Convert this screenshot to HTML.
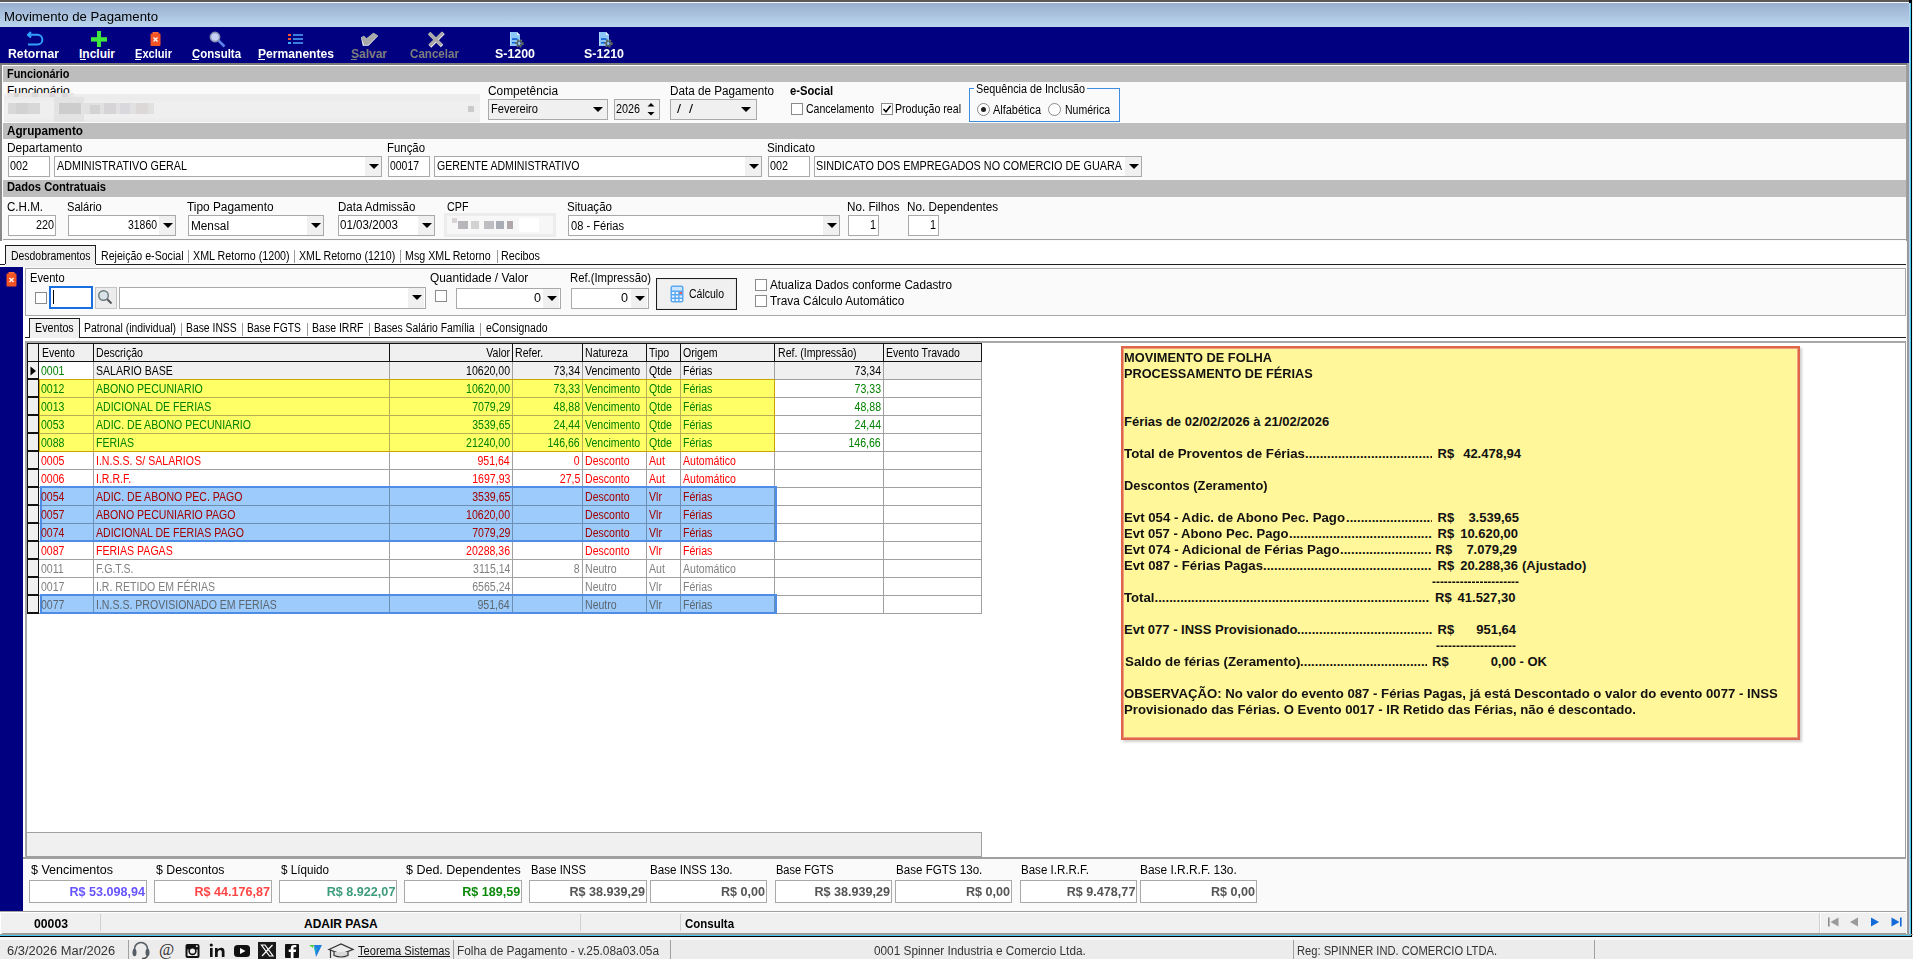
<!DOCTYPE html>
<html><head><meta charset="utf-8"><title>Movimento de Pagamento</title>
<style>
html,body{margin:0;padding:0;}
body{width:1913px;height:959px;position:relative;overflow:hidden;background:#fafafa;font-family:"Liberation Sans", sans-serif;}
body div, body svg{position:absolute;box-sizing:border-box;}
.t{white-space:pre;}

.inp{background:#fff;border:1px solid #a5a5a5;}
.sel{background:#fff;border:1px solid #a5a5a5;}
.selg{background:#f0f0f0;border:1px solid #a5a5a5;}
.hdr{background:#bdbdbd;}
.arr{width:0;height:0;border-left:5px solid transparent;border-right:5px solid transparent;border-top:5px solid #000;}
.cb{background:#fff;border:1px solid #8f8f8f;}

</style></head><body>

<div style="left:0px;top:0px;width:1913px;height:2px;background:#5a5a5a"></div>
<div style="left:0px;top:2px;width:1913px;height:1px;background:#f4f7fb"></div>
<div style="left:0px;top:3px;width:1909px;height:24px;background:linear-gradient(#98b0cf,#bcd5ee)"></div>
<div style="left:1909px;top:0px;width:3px;height:937px;background:#000"></div>
<div style="left:1909px;top:3px;width:1px;height:933px;background:#b5d5ee"></div>
<div style="left:1910px;top:3px;width:1px;height:933px;background:#45c8f2"></div>
<div style="left:1912px;top:0px;width:1px;height:959px;background:#eeeeee"></div>
<div class="t" style="left:4.00px;top:10.00px;font-size:13px;line-height:13px;transform:scaleX(1.0148);transform-origin:0 0;">Movimento de Pagamento</div>
<div style="left:0px;top:27px;width:1909px;height:36px;background:#000080"></div>
<div class="t" style="left:8.00px;top:47.84px;font-size:12px;line-height:12px;font-weight:700;color:#fff;transform:scaleX(1.0198);transform-origin:0 0;">Retornar</div>
<div class="t" style="left:79.00px;top:47.84px;font-size:12px;line-height:12px;font-weight:700;color:#fff;">Incluir</div>
<div class="t" style="left:135.00px;top:47.84px;font-size:12px;line-height:12px;font-weight:700;color:#fff;transform:scaleX(0.9245);transform-origin:0 0;">Excluir</div>
<div class="t" style="left:192.00px;top:47.84px;font-size:12px;line-height:12px;font-weight:700;color:#fff;transform:scaleX(0.9545);transform-origin:0 0;">Consulta</div>
<div class="t" style="left:258.00px;top:47.84px;font-size:12px;line-height:12px;font-weight:700;color:#fff;transform:scaleX(1.0084);transform-origin:0 0;">Permanentes</div>
<div class="t" style="left:351.00px;top:47.84px;font-size:12px;line-height:12px;font-weight:700;color:#7d7d7d;">Salvar</div>
<div class="t" style="left:410.00px;top:47.84px;font-size:12px;line-height:12px;font-weight:700;color:#7d7d7d;transform:scaleX(0.9666);transform-origin:0 0;">Cancelar</div>
<div class="t" style="left:495.00px;top:47.84px;font-size:12px;line-height:12px;font-weight:700;color:#fff;transform:scaleX(1.0337);transform-origin:0 0;">S-1200</div>
<div class="t" style="left:584.00px;top:47.84px;font-size:12px;line-height:12px;font-weight:700;color:#fff;transform:scaleX(1.0337);transform-origin:0 0;">S-1210</div>
<div style="left:80px;top:59px;width:6px;height:1px;background:#fff"></div>
<div style="left:135px;top:59px;width:6px;height:1px;background:#fff"></div>
<div style="left:192px;top:59px;width:7px;height:1px;background:#fff"></div>
<div style="left:258px;top:59px;width:7px;height:1px;background:#fff"></div>
<div style="left:351px;top:59px;width:6px;height:1px;background:#7d7d7d"></div>
<svg style="left:25px;top:30px" width="20" height="18" viewBox="0 0 20 18">
<path d="M3 4.8 H12.5 A4.85 4.85 0 0 1 12.5 14.5 H3" fill="none" stroke="#30a0ff" stroke-width="2"/>
<path d="M6 2.2 L3 4.8 L6 7.4" fill="none" stroke="#30a0ff" stroke-width="2.2" stroke-linejoin="round"/>
</svg>
<svg style="left:91px;top:31px" width="16" height="16" viewBox="0 0 16 16">
<rect x="6" y="0" width="4" height="16" fill="#3ee83e"/><rect x="0" y="6.2" width="16" height="4.4" fill="#3ee83e"/>
</svg>
<svg style="left:150px;top:32px" width="11" height="14" viewBox="0 0 11 14">
<rect x="2.5" y="0" width="6" height="2" fill="#ff6a3a"/><rect x="0.5" y="1.5" width="10" height="12.5" rx="1" fill="#f45424"/>
<path d="M3.5 5.5 L7.5 9.5 M7.5 5.5 L3.5 9.5" stroke="#fff" stroke-width="1.3"/>
</svg>
<svg style="left:209px;top:31px" width="18" height="17" viewBox="0 0 18 17">
<line x1="9" y1="9" x2="15.5" y2="15.5" stroke="#5b7fe6" stroke-width="2.6"/>
<circle cx="6" cy="6" r="4.6" fill="#c9d0f5" stroke="#8b93b3" stroke-width="1.6"/>
</svg>
<svg style="left:288px;top:33px" width="16" height="12" viewBox="0 0 16 12">
<rect x="0" y="1" width="3" height="2" fill="#f4522a"/><rect x="0" y="5" width="3" height="2" fill="#f4522a"/><rect x="0" y="9" width="3" height="2" fill="#3fb3f5"/>
<rect x="5" y="1" width="10" height="2" fill="#3a7ee0"/><rect x="5" y="5" width="10" height="2" fill="#3a7ee0"/><rect x="5" y="9" width="10" height="2" fill="#3a7ee0"/>
</svg>
<svg style="left:355px;top:28px" width="30" height="22" viewBox="0 0 30 22">
<path d="M7.8 17.8 L13.5 17.8 L23 8 L18.5 5 L11.5 10.8 L9 8.2 L6 9.5 Z" fill="#fff"/>
<path d="M6 9.3 L9 7.8 L11.5 10.2 L18.5 4.8 L23 7.6 L13.2 17 L9 17 Z" fill="#a9a9a9"/>
</svg>
<svg style="left:425px;top:30px" width="22" height="19" viewBox="0 0 22 19">
<path d="M4.5 3.5 L17 16" stroke="#fff" stroke-width="3.4"/><path d="M18.5 3 L5 16.5" stroke="#fff" stroke-width="3.4"/>
<path d="M4 3 L16.5 15.3" stroke="#a9a9a9" stroke-width="3.4"/><path d="M18 2.6 L4.5 15.8" stroke="#a9a9a9" stroke-width="3.4"/>
</svg>
<svg style="left:509px;top:31px" width="16" height="17" viewBox="0 0 16 17">
<path d="M1 1 H8 L11 4 V15 H1 Z" fill="#8cc6f8"/><path d="M1 1 H2 V15 H1 Z" fill="#a8dcff"/><path d="M8 1 V4 H11 Z" fill="#eaf7ff"/>
<rect x="3" y="7.2" width="5.5" height="1.7" fill="#0f5fd0"/><rect x="3" y="11" width="4" height="1.5" fill="#0f5fd0"/>
<circle cx="10.5" cy="12.4" r="2.9" fill="none" stroke="#5b6d6a" stroke-width="2.6" stroke-dasharray="1.6 1.2"/>
<circle cx="10.5" cy="12.4" r="2.3" fill="none" stroke="#56625f" stroke-width="1.4"/>
<circle cx="10.5" cy="12.4" r="1.2" fill="#8cc6f8"/>
</svg>
<svg style="left:598px;top:31px" width="16" height="17" viewBox="0 0 16 17">
<path d="M1 1 H8 L11 4 V15 H1 Z" fill="#8cc6f8"/><path d="M1 1 H2 V15 H1 Z" fill="#a8dcff"/><path d="M8 1 V4 H11 Z" fill="#eaf7ff"/>
<rect x="3" y="7.2" width="5.5" height="1.7" fill="#0f5fd0"/><rect x="3" y="11" width="4" height="1.5" fill="#0f5fd0"/>
<circle cx="10.5" cy="12.4" r="2.9" fill="none" stroke="#5b6d6a" stroke-width="2.6" stroke-dasharray="1.6 1.2"/>
<circle cx="10.5" cy="12.4" r="2.3" fill="none" stroke="#56625f" stroke-width="1.4"/>
<circle cx="10.5" cy="12.4" r="1.2" fill="#8cc6f8"/>
</svg>
<div style="left:0px;top:63px;width:1909px;height:2px;background:#7a7a7a"></div>
<div style="left:0px;top:65px;width:2px;height:176px;background:#8a8a8a"></div>
<div style="left:2px;top:65px;width:1907px;height:1px;background:#fff"></div>
<div style="left:2px;top:65px;width:1px;height:176px;background:#fff"></div>
<div style="left:1907px;top:63px;width:2px;height:872px;background:#9a9a9a"></div>
<div style="left:1906px;top:65px;width:1px;height:176px;background:#a0a0a0"></div>
<div style="left:3px;top:66px;width:1903px;height:16px;background:#bdbdbd"></div>
<div class="t" style="left:7.00px;top:67.84px;font-size:12px;line-height:12px;font-weight:700;transform:scaleX(0.9102);transform-origin:0 0;">Funcionário</div>
<div style="left:3px;top:82px;width:500px;height:12px;overflow:hidden"><div class="t" style="left:4px;top:3.2px;font-size:12px;line-height:12px">Funcionário</div></div>
<div style="left:4px;top:94px;width:476px;height:28px;background:linear-gradient(#eeeeee,#ebebeb 15%,#efefef 30%,#efefef 85%,#e9e9e9)"></div>
<svg style="left:4px;top:93px" width="476" height="29">
<rect x="4" y="0" width="66" height="4" fill="#e9e5e5"/>
<rect x="10" y="0" width="5" height="4" fill="#d9d3d3"/><rect x="28" y="0" width="6" height="4" fill="#dedada"/><rect x="45" y="0" width="6" height="4" fill="#dcd6dc"/><rect x="58" y="0" width="6" height="4" fill="#d8d8dc"/>
<rect x="4" y="10" width="32" height="11" fill="#d8d8d8"/><rect x="12" y="10" width="12" height="11" fill="#d2d2d2"/>
<rect x="50" y="4" width="30" height="25" fill="#e3e3e3"/><rect x="55" y="10" width="22" height="11" fill="#cdcdcd"/>
<rect x="80" y="10" width="70" height="11" fill="#e1e1e1"/><rect x="86" y="12" width="10" height="9" fill="#d3d3d3"/><rect x="100" y="10" width="12" height="11" fill="#d6d4d6"/><rect x="116" y="10" width="10" height="11" fill="#d9d9dd"/><rect x="132" y="10" width="12" height="11" fill="#dcd8d8"/>
<rect x="464" y="13" width="6" height="6" fill="#cbcbcb"/>
</svg>
<div class="t" style="left:487.50px;top:85.24px;font-size:12px;line-height:12px;transform:scaleX(0.9900);transform-origin:0 0;">Competência</div>
<div style="left:488px;top:99px;width:120px;height:21px;background:#f0f0f0;border:1px solid #a9a9a9"></div>
<div class="t" style="left:491.00px;top:103.34px;font-size:12px;line-height:12px;transform:scaleX(0.9273);transform-origin:0 0;">Fevereiro</div>
<div style="left:593px;top:107px;width:10px;height:5px;border-left:5px solid transparent;border-right:5px solid transparent;border-top:5px solid #000"></div>
<div style="left:614px;top:99px;width:46px;height:21px;background:#f0f0f0;border:1px solid #a9a9a9"></div>
<div class="t" style="left:616.00px;top:103.34px;font-size:12px;line-height:12px;transform:scaleX(0.8990);transform-origin:0 0;">2026</div>
<svg style="left:647px;top:102px" width="8" height="15"><path d="M0.5 4.5 L4 1 L7.5 4.5 Z M0.5 10 L4 13.5 L7.5 10 Z" fill="#000"/></svg>
<div class="t" style="left:669.50px;top:85.24px;font-size:12px;line-height:12px;transform:scaleX(0.9743);transform-origin:0 0;">Data de Pagamento</div>
<div style="left:670px;top:99px;width:87px;height:21px;background:#f0f0f0;border:1px solid #a9a9a9"></div>
<div class="t" style="left:677.00px;top:103.34px;font-size:12px;line-height:12px;transform:scaleX(1.1998);transform-origin:0 0;">/  /</div>
<div style="left:741px;top:107px;width:10px;height:5px;border-left:5px solid transparent;border-right:5px solid transparent;border-top:5px solid #000"></div>
<div class="t" style="left:789.50px;top:84.84px;font-size:12px;line-height:12px;font-weight:700;transform:scaleX(0.9344);transform-origin:0 0;">e-Social</div>
<div style="left:791px;top:103px;width:12px;height:12px;background:#fff;border:1px solid #8a8a8a"></div>
<div class="t" style="left:806.00px;top:103.34px;font-size:12px;line-height:12px;transform:scaleX(0.8788);transform-origin:0 0;">Cancelamento</div>
<div style="left:881px;top:103px;width:12px;height:12px;background:#fff;border:1px solid #8a8a8a"></div>
<svg style="left:882px;top:104px" width="10" height="10"><path d="M1.5 5 L4 7.8 L8.5 1.8" fill="none" stroke="#000" stroke-width="1.5"/></svg>
<div class="t" style="left:895.00px;top:103.34px;font-size:12px;line-height:12px;transform:scaleX(0.8834);transform-origin:0 0;">Produção real</div>
<div style="left:969px;top:88px;width:151px;height:34px;border:1px solid #3d8ee0"></div>
<div style="left:974px;top:84px;width:113px;height:8px;background:#fafafa"></div>
<div class="t" style="left:976.00px;top:82.84px;font-size:12px;line-height:12px;transform:scaleX(0.8977);transform-origin:0 0;">Sequência de Inclusão</div>
<div style="left:977px;top:103px;width:13px;height:13px;background:#fff;border:1px solid #8a8a8a;border-radius:50%"></div>
<div style="left:981px;top:107px;width:5px;height:5px;background:#222;border-radius:50%"></div>
<div class="t" style="left:993.00px;top:103.84px;font-size:12px;line-height:12px;transform:scaleX(0.9108);transform-origin:0 0;">Alfabética</div>
<div style="left:1048px;top:103px;width:13px;height:13px;background:#fff;border:1px solid #8a8a8a;border-radius:50%"></div>
<div class="t" style="left:1065.00px;top:103.84px;font-size:12px;line-height:12px;transform:scaleX(0.8764);transform-origin:0 0;">Numérica</div>
<div style="left:3px;top:123px;width:1903px;height:16px;background:#bdbdbd"></div>
<div class="t" style="left:7.00px;top:124.84px;font-size:12px;line-height:12px;font-weight:700;transform:scaleX(0.9744);transform-origin:0 0;">Agrupamento</div>
<div class="t" style="left:7.30px;top:141.54px;font-size:12px;line-height:12px;transform:scaleX(0.9902);transform-origin:0 0;">Departamento</div>
<div style="left:8px;top:156px;width:42px;height:21px;background:#fff;border:1px solid #a9a9a9"></div>
<div class="t" style="left:10.00px;top:159.84px;font-size:12px;line-height:12px;transform:scaleX(0.8990);transform-origin:0 0;">002</div>
<div style="left:54px;top:156px;width:328px;height:21px;background:#fff;border:1px solid #a9a9a9"></div>
<div class="t" style="left:57.00px;top:159.84px;font-size:12px;line-height:12px;transform:scaleX(0.8957);transform-origin:0 0;">ADMINISTRATIVO GERAL</div>
<div style="left:365px;top:157px;width:16px;height:19px;background:#f0f0f0"></div>
<div style="left:369px;top:164px;width:10px;height:5px;border-left:5px solid transparent;border-right:5px solid transparent;border-top:5px solid #000"></div>
<div class="t" style="left:387.00px;top:141.54px;font-size:12px;line-height:12px;transform:scaleX(0.9494);transform-origin:0 0;">Função</div>
<div style="left:388px;top:156px;width:42px;height:21px;background:#fff;border:1px solid #a9a9a9"></div>
<div class="t" style="left:390.00px;top:159.84px;font-size:12px;line-height:12px;transform:scaleX(0.8691);transform-origin:0 0;">00017</div>
<div style="left:434px;top:156px;width:328px;height:21px;background:#fff;border:1px solid #a9a9a9"></div>
<div class="t" style="left:436.50px;top:159.84px;font-size:12px;line-height:12px;transform:scaleX(0.8802);transform-origin:0 0;">GERENTE ADMINISTRATIVO</div>
<div style="left:745px;top:157px;width:16px;height:19px;background:#f0f0f0"></div>
<div style="left:749px;top:164px;width:10px;height:5px;border-left:5px solid transparent;border-right:5px solid transparent;border-top:5px solid #000"></div>
<div class="t" style="left:767.00px;top:141.54px;font-size:12px;line-height:12px;transform:scaleX(0.9723);transform-origin:0 0;">Sindicato</div>
<div style="left:768px;top:156px;width:42px;height:21px;background:#fff;border:1px solid #a9a9a9"></div>
<div class="t" style="left:770.00px;top:159.84px;font-size:12px;line-height:12px;transform:scaleX(0.8990);transform-origin:0 0;">002</div>
<div style="left:814px;top:156px;width:328px;height:21px;background:#fff;border:1px solid #a9a9a9"></div>
<div class="t" style="left:816.00px;top:159.84px;font-size:12px;line-height:12px;transform:scaleX(0.9011);transform-origin:0 0;">SINDICATO DOS EMPREGADOS NO COMERCIO DE GUARA</div>
<div style="left:1125px;top:157px;width:16px;height:19px;background:#f0f0f0"></div>
<div style="left:1129px;top:164px;width:10px;height:5px;border-left:5px solid transparent;border-right:5px solid transparent;border-top:5px solid #000"></div>
<div style="left:3px;top:180px;width:1903px;height:17px;background:#bdbdbd"></div>
<div class="t" style="left:7.00px;top:181.34px;font-size:12px;line-height:12px;font-weight:700;transform:scaleX(0.9280);transform-origin:0 0;">Dados Contratuais</div>
<div class="t" style="left:7.30px;top:201.34px;font-size:12px;line-height:12px;transform:scaleX(0.9644);transform-origin:0 0;">C.H.M.</div>
<div class="t" style="left:67.00px;top:201.34px;font-size:12px;line-height:12px;transform:scaleX(0.9263);transform-origin:0 0;">Salário</div>
<div class="t" style="left:187.00px;top:201.34px;font-size:12px;line-height:12px;transform:scaleX(0.9885);transform-origin:0 0;">Tipo Pagamento</div>
<div class="t" style="left:337.50px;top:201.34px;font-size:12px;line-height:12px;transform:scaleX(0.9586);transform-origin:0 0;">Data Admissão</div>
<div class="t" style="left:447.00px;top:201.34px;font-size:12px;line-height:12px;transform:scaleX(0.8958);transform-origin:0 0;">CPF</div>
<div class="t" style="left:567.00px;top:201.34px;font-size:12px;line-height:12px;transform:scaleX(0.9636);transform-origin:0 0;">Situação</div>
<div class="t" style="left:847.00px;top:201.34px;font-size:12px;line-height:12px;transform:scaleX(0.9719);transform-origin:0 0;">No. Filhos</div>
<div class="t" style="left:907.00px;top:201.34px;font-size:12px;line-height:12px;transform:scaleX(0.9743);transform-origin:0 0;">No. Dependentes</div>
<div style="left:8px;top:215px;width:48px;height:21px;background:#fff;border:1px solid #a9a9a9"></div>
<div class="t" style="left:36.00px;top:219.34px;font-size:12px;line-height:12px;transform:scaleX(0.8990);transform-origin:0 0;">220</div>
<div style="left:68px;top:215px;width:108px;height:21px;background:#fff;border:1px solid #a9a9a9"></div>
<div class="t" style="left:128.00px;top:219.34px;font-size:12px;line-height:12px;transform:scaleX(0.8691);transform-origin:0 0;">31860</div>
<div style="left:159px;top:216px;width:16px;height:19px;background:#f0f0f0"></div>
<div style="left:163px;top:223px;width:10px;height:5px;border-left:5px solid transparent;border-right:5px solid transparent;border-top:5px solid #000"></div>
<div style="left:188px;top:215px;width:136px;height:21px;background:#fff;border:1px solid #a9a9a9"></div>
<div class="t" style="left:191.00px;top:219.84px;font-size:12px;line-height:12px;transform:scaleX(0.9823);transform-origin:0 0;">Mensal</div>
<div style="left:307px;top:216px;width:16px;height:19px;background:#f0f0f0"></div>
<div style="left:311px;top:223px;width:10px;height:5px;border-left:5px solid transparent;border-right:5px solid transparent;border-top:5px solid #000"></div>
<div style="left:338px;top:215px;width:97px;height:21px;background:#fff;border:1px solid #a9a9a9"></div>
<div class="t" style="left:340.00px;top:219.34px;font-size:12px;line-height:12px;transform:scaleX(0.9657);transform-origin:0 0;">01/03/2003</div>
<div style="left:418px;top:216px;width:16px;height:19px;background:#f0f0f0"></div>
<div style="left:422px;top:223px;width:10px;height:5px;border-left:5px solid transparent;border-right:5px solid transparent;border-top:5px solid #000"></div>
<div style="left:444px;top:213px;width:112px;height:24px;background:#ececec"></div>
<svg style="left:444px;top:213px" width="112" height="24">
<rect x="3" y="3" width="106" height="18" fill="#f7f7f7"/>
<rect x="8" y="5" width="5" height="5" fill="#d9d3d3"/><rect x="14" y="8" width="10" height="8" fill="#b9b6bb"/>
<rect x="27" y="8" width="8" height="8" fill="#d2d2d2"/><rect x="40" y="8" width="10" height="8" fill="#bdbdc2"/>
<rect x="52" y="8" width="8" height="8" fill="#a9adb4"/><rect x="63" y="8" width="6" height="8" fill="#b0a8a8"/>
<rect x="75" y="5" width="20" height="14" fill="#fff"/>
</svg>
<div style="left:568px;top:215px;width:272px;height:21px;background:#fff;border:1px solid #a9a9a9"></div>
<div class="t" style="left:571.00px;top:219.84px;font-size:12px;line-height:12px;transform:scaleX(0.9241);transform-origin:0 0;">08 - Férias</div>
<div style="left:823px;top:216px;width:16px;height:19px;background:#f0f0f0"></div>
<div style="left:827px;top:223px;width:10px;height:5px;border-left:5px solid transparent;border-right:5px solid transparent;border-top:5px solid #000"></div>
<div style="left:848px;top:215px;width:31px;height:21px;background:#fff;border:1px solid #a9a9a9"></div>
<div class="t" style="left:870.00px;top:219.34px;font-size:12px;line-height:12px;transform:scaleX(0.8990);transform-origin:0 0;">1</div>
<div style="left:908px;top:215px;width:31px;height:21px;background:#fff;border:1px solid #a9a9a9"></div>
<div class="t" style="left:930.00px;top:219.34px;font-size:12px;line-height:12px;transform:scaleX(0.8990);transform-origin:0 0;">1</div>
<div style="left:3px;top:239px;width:1903px;height:1px;background:#a0a0a0"></div>
<div style="left:0px;top:241px;width:1906px;height:24px;background:#fff"></div>
<div style="left:0px;top:264px;width:1906px;height:1px;background:#1e1e1e"></div>
<div style="left:5px;top:245px;width:91px;height:20px;background:#f0f0f0;border:1px solid #1e1e1e;border-bottom:none"></div>
<div class="t" style="left:10.50px;top:249.64px;font-size:12px;line-height:12px;transform:scaleX(0.8700);transform-origin:0 0;">Desdobramentos</div>
<div class="t" style="left:100.50px;top:249.64px;font-size:12px;line-height:12px;transform:scaleX(0.8835);transform-origin:0 0;">Rejeição e-Social</div>
<div style="left:188px;top:250px;width:1px;height:13px;background:#9a9a9a"></div>
<div class="t" style="left:192.60px;top:249.64px;font-size:12px;line-height:12px;transform:scaleX(0.8922);transform-origin:0 0;">XML Retorno (1200)</div>
<div style="left:294px;top:250px;width:1px;height:13px;background:#9a9a9a"></div>
<div class="t" style="left:298.60px;top:249.64px;font-size:12px;line-height:12px;transform:scaleX(0.8885);transform-origin:0 0;">XML Retorno (1210)</div>
<div style="left:400px;top:250px;width:1px;height:13px;background:#9a9a9a"></div>
<div class="t" style="left:405.00px;top:249.64px;font-size:12px;line-height:12px;transform:scaleX(0.8893);transform-origin:0 0;">Msg XML Retorno</div>
<div style="left:497px;top:250px;width:1px;height:13px;background:#9a9a9a"></div>
<div class="t" style="left:501.00px;top:249.64px;font-size:12px;line-height:12px;transform:scaleX(0.8996);transform-origin:0 0;">Recibos</div>
<div style="left:0px;top:265px;width:25px;height:646px;background:#fff"></div>
<div style="left:0px;top:267px;width:23px;height:644px;background:#000080"></div>
<div style="left:5px;top:264px;width:91px;height:3px;background:#f0f0f0"></div>
<svg style="left:6px;top:272px" width="11" height="15" viewBox="0 0 11 15">
<rect x="2.5" y="0" width="6" height="2" fill="#ff6a3a"/><rect x="0.5" y="1.5" width="10" height="13" rx="1" fill="#f45424"/>
<path d="M3.5 6 L7.5 10 M7.5 6 L3.5 10" stroke="#fff" stroke-width="1.3"/>
</svg>
<div style="left:25px;top:268px;width:1881px;height:48px;background:#fafafa;border-top:1px solid #a8a8a8;border-left:1px solid #a8a8a8;border-bottom:1px solid #a8a8a8"></div>
<div style="left:26px;top:269px;width:1880px;height:1px;background:#fff"></div>
<div style="left:1905px;top:268px;width:1px;height:48px;background:#a8a8a8"></div>
<div class="t" style="left:30.40px;top:272.34px;font-size:12px;line-height:12px;transform:scaleX(0.9261);transform-origin:0 0;">Evento</div>
<div style="left:35px;top:292px;width:12px;height:12px;background:#fff;border:1px solid #8a8a8a"></div>
<div style="left:49px;top:286px;width:44px;height:23px;background:#fff;border:2px solid #1a6fe0"></div>
<div style="left:53px;top:290px;width:1px;height:14px;background:#000"></div>
<div style="left:95px;top:287px;width:22px;height:22px;background:#ececec;border:1px solid #c4c4c4"></div>
<svg style="left:97px;top:289px" width="18" height="17" viewBox="0 0 18 17">
<line x1="9.5" y1="9.5" x2="14.5" y2="14.5" stroke="#555" stroke-width="2"/>
<circle cx="6.5" cy="6.5" r="4.8" fill="#d9e3e8" stroke="#6c7a80" stroke-width="1.4"/>
</svg>
<div style="left:119px;top:287px;width:307px;height:22px;background:#fff;border:1px solid #a9a9a9"></div>
<div style="left:408px;top:288px;width:16px;height:20px;background:#f0f0f0"></div>
<div style="left:412px;top:295px;width:10px;height:5px;border-left:5px solid transparent;border-right:5px solid transparent;border-top:5px solid #000"></div>
<div class="t" style="left:430.40px;top:272.44px;font-size:12px;line-height:12px;transform:scaleX(0.9912);transform-origin:0 0;">Quantidade / Valor</div>
<div style="left:435px;top:290px;width:12px;height:12px;background:#fff;border:1px solid #8a8a8a"></div>
<div style="left:456px;top:288px;width:105px;height:21px;background:#fff;border:1px solid #a9a9a9"></div>
<div class="t" style="left:534.00px;top:292.34px;font-size:12px;line-height:12px;transform:scaleX(1.0489);transform-origin:0 0;">0</div>
<div style="left:543px;top:289px;width:16px;height:19px;background:#f0f0f0"></div>
<div style="left:547px;top:296px;width:10px;height:5px;border-left:5px solid transparent;border-right:5px solid transparent;border-top:5px solid #000"></div>
<div class="t" style="left:570.40px;top:272.44px;font-size:12px;line-height:12px;transform:scaleX(0.9416);transform-origin:0 0;">Ref.(Impressão)</div>
<div style="left:571px;top:288px;width:78px;height:21px;background:#fff;border:1px solid #a9a9a9"></div>
<div class="t" style="left:621.00px;top:292.34px;font-size:12px;line-height:12px;transform:scaleX(1.0489);transform-origin:0 0;">0</div>
<div style="left:631px;top:289px;width:16px;height:19px;background:#f0f0f0"></div>
<div style="left:635px;top:296px;width:10px;height:5px;border-left:5px solid transparent;border-right:5px solid transparent;border-top:5px solid #000"></div>
<div style="left:656px;top:278px;width:81px;height:32px;background:#f0f0f0;border:1px solid #1e1e1e;box-shadow:inset 0 0 0 1px #e6e6e6"></div>
<svg style="left:670px;top:285px" width="14" height="18" viewBox="0 0 14 18">
<rect x="0.5" y="0.5" width="13" height="17" rx="2" fill="#5aa8f0"/><rect x="2" y="2" width="10" height="3.5" fill="#cde6ff"/>
<g fill="#e8f4ff"><rect x="2" y="7" width="2.4" height="2"/><rect x="5.8" y="7" width="2.4" height="2"/><rect x="9.6" y="7" width="2.4" height="2" fill="#f06060"/>
<rect x="2" y="10.5" width="2.4" height="2"/><rect x="5.8" y="10.5" width="2.4" height="2"/><rect x="9.6" y="10.5" width="2.4" height="2"/>
<rect x="2" y="14" width="2.4" height="2"/><rect x="5.8" y="14" width="2.4" height="2"/><rect x="9.6" y="14" width="2.4" height="2"/></g>
</svg>
<div class="t" style="left:689.00px;top:287.84px;font-size:12px;line-height:12px;transform:scaleX(0.8746);transform-origin:0 0;">Cálculo</div>
<div style="left:755px;top:279px;width:12px;height:12px;background:#fff;border:1px solid #8a8a8a"></div>
<div class="t" style="left:770.00px;top:279.34px;font-size:12px;line-height:12px;transform:scaleX(0.9780);transform-origin:0 0;">Atualiza Dados conforme Cadastro</div>
<div style="left:755px;top:295px;width:12px;height:12px;background:#fff;border:1px solid #8a8a8a"></div>
<div class="t" style="left:770.00px;top:295.04px;font-size:12px;line-height:12px;transform:scaleX(0.9858);transform-origin:0 0;">Trava Cálculo Automático</div>
<div style="left:25px;top:316px;width:1881px;height:25px;background:#fff"></div>
<div style="left:25px;top:337px;width:1881px;height:1px;background:#1e1e1e"></div>
<div style="left:29px;top:318px;width:51px;height:20px;background:#f0f0f0;border:1px solid #1e1e1e;border-bottom:none"></div>
<div class="t" style="left:34.50px;top:322.14px;font-size:12px;line-height:12px;transform:scaleX(0.8925);transform-origin:0 0;">Eventos</div>
<div class="t" style="left:83.50px;top:322.14px;font-size:12px;line-height:12px;transform:scaleX(0.8675);transform-origin:0 0;">Patronal (individual)</div>
<div style="left:181px;top:323px;width:1px;height:13px;background:#9a9a9a"></div>
<div class="t" style="left:185.50px;top:322.14px;font-size:12px;line-height:12px;transform:scaleX(0.8638);transform-origin:0 0;">Base INSS</div>
<div style="left:242px;top:323px;width:1px;height:13px;background:#9a9a9a"></div>
<div class="t" style="left:247.20px;top:322.14px;font-size:12px;line-height:12px;transform:scaleX(0.8583);transform-origin:0 0;">Base FGTS</div>
<div style="left:307px;top:323px;width:1px;height:13px;background:#9a9a9a"></div>
<div class="t" style="left:312.40px;top:322.14px;font-size:12px;line-height:12px;transform:scaleX(0.8776);transform-origin:0 0;">Base IRRF</div>
<div style="left:369px;top:323px;width:1px;height:13px;background:#9a9a9a"></div>
<div class="t" style="left:374.40px;top:322.14px;font-size:12px;line-height:12px;transform:scaleX(0.8619);transform-origin:0 0;">Bases Salário Família</div>
<div style="left:480px;top:323px;width:1px;height:13px;background:#9a9a9a"></div>
<div class="t" style="left:485.50px;top:322.14px;font-size:12px;line-height:12px;transform:scaleX(0.8696);transform-origin:0 0;">eConsignado</div>
<div style="left:25px;top:341px;width:1881px;height:517px;background:#fff"></div>
<div style="left:25px;top:341px;width:2px;height:517px;background:#a8a8a8"></div>
<div style="left:25px;top:341px;width:1881px;height:2px;background:#a8a8a8"></div>
<div style="left:1905px;top:341px;width:1px;height:517px;background:#a0a0a0"></div>
<div style="left:27px;top:343px;width:955px;height:19px;background:#f0f0f0;border-top:1px solid #111;border-left:1px solid #111"></div>
<div style="left:27px;top:361px;width:955px;height:1px;background:#111"></div>
<div style="left:38px;top:343px;width:1px;height:19px;background:#111"></div>
<div style="left:93px;top:343px;width:1px;height:19px;background:#111"></div>
<div style="left:389px;top:343px;width:1px;height:19px;background:#111"></div>
<div style="left:512px;top:343px;width:1px;height:19px;background:#111"></div>
<div style="left:582px;top:343px;width:1px;height:19px;background:#111"></div>
<div style="left:646px;top:343px;width:1px;height:19px;background:#111"></div>
<div style="left:680px;top:343px;width:1px;height:19px;background:#111"></div>
<div style="left:774px;top:343px;width:1px;height:19px;background:#111"></div>
<div style="left:883px;top:343px;width:1px;height:19px;background:#111"></div>
<div style="left:981px;top:343px;width:1px;height:19px;background:#111"></div>
<div class="t" style="left:41.70px;top:346.84px;font-size:12px;line-height:12px;transform:scaleX(0.88);transform-origin:0 0;">Evento</div>
<div class="t" style="left:96.20px;top:346.84px;font-size:12px;line-height:12px;transform:scaleX(0.88);transform-origin:0 0;">Descrição</div>
<div class="t" style="left:482.88px;top:346.84px;font-size:12px;line-height:12px;transform:scaleX(0.88);transform-origin:100% 0;">Valor</div>
<div class="t" style="left:515.00px;top:346.84px;font-size:12px;line-height:12px;transform:scaleX(0.88);transform-origin:0 0;">Refer.</div>
<div class="t" style="left:585.00px;top:346.84px;font-size:12px;line-height:12px;transform:scaleX(0.88);transform-origin:0 0;">Natureza</div>
<div class="t" style="left:649.00px;top:346.84px;font-size:12px;line-height:12px;transform:scaleX(0.88);transform-origin:0 0;">Tipo</div>
<div class="t" style="left:683.00px;top:346.84px;font-size:12px;line-height:12px;transform:scaleX(0.88);transform-origin:0 0;">Origem</div>
<div class="t" style="left:778.00px;top:346.84px;font-size:12px;line-height:12px;transform:scaleX(0.88);transform-origin:0 0;">Ref. (Impressão)</div>
<div class="t" style="left:886.00px;top:346.84px;font-size:12px;line-height:12px;transform:scaleX(0.88);transform-origin:0 0;">Evento Travado</div>
<div style="left:28px;top:362px;width:10px;height:251px;background:#f0f0f0"></div>
<div style="left:27px;top:362px;width:1px;height:252px;background:#111"></div>
<div style="left:38px;top:362px;width:1px;height:252px;background:#111"></div>
<div style="left:94px;top:362px;width:887px;height:17px;background:#f0f0f0"></div>
<div style="left:39px;top:379px;width:736px;height:73px;background:#ffff66;border:1px solid #c9a400"></div>
<div style="left:40px;top:486px;width:737px;height:56px;background:#9dcbfb;border:2px solid #4f8ce6"></div>
<div style="left:40px;top:594px;width:737px;height:20px;background:#9dcbfb;border:2px solid #4f8ce6"></div>
<div style="left:39px;top:379px;width:943px;height:1px;background:#a0a0a0"></div>
<div style="left:27px;top:378px;width:12px;height:2px;background:#111"></div>
<div style="left:39px;top:397px;width:943px;height:1px;background:#a0a0a0"></div>
<div style="left:27px;top:396px;width:12px;height:2px;background:#111"></div>
<div style="left:39px;top:415px;width:943px;height:1px;background:#a0a0a0"></div>
<div style="left:27px;top:414px;width:12px;height:2px;background:#111"></div>
<div style="left:39px;top:433px;width:943px;height:1px;background:#a0a0a0"></div>
<div style="left:27px;top:432px;width:12px;height:2px;background:#111"></div>
<div style="left:39px;top:451px;width:943px;height:1px;background:#a0a0a0"></div>
<div style="left:27px;top:450px;width:12px;height:2px;background:#111"></div>
<div style="left:39px;top:469px;width:943px;height:1px;background:#a0a0a0"></div>
<div style="left:27px;top:468px;width:12px;height:2px;background:#111"></div>
<div style="left:39px;top:487px;width:943px;height:1px;background:#a0a0a0"></div>
<div style="left:27px;top:486px;width:12px;height:2px;background:#111"></div>
<div style="left:39px;top:505px;width:943px;height:1px;background:#a0a0a0"></div>
<div style="left:27px;top:504px;width:12px;height:2px;background:#111"></div>
<div style="left:39px;top:523px;width:943px;height:1px;background:#a0a0a0"></div>
<div style="left:27px;top:522px;width:12px;height:2px;background:#111"></div>
<div style="left:39px;top:541px;width:943px;height:1px;background:#a0a0a0"></div>
<div style="left:27px;top:540px;width:12px;height:2px;background:#111"></div>
<div style="left:39px;top:559px;width:943px;height:1px;background:#a0a0a0"></div>
<div style="left:27px;top:558px;width:12px;height:2px;background:#111"></div>
<div style="left:39px;top:577px;width:943px;height:1px;background:#a0a0a0"></div>
<div style="left:27px;top:576px;width:12px;height:2px;background:#111"></div>
<div style="left:39px;top:595px;width:943px;height:1px;background:#a0a0a0"></div>
<div style="left:27px;top:594px;width:12px;height:2px;background:#111"></div>
<div style="left:39px;top:613px;width:943px;height:1px;background:#a0a0a0"></div>
<div style="left:27px;top:612px;width:12px;height:2px;background:#111"></div>
<div style="left:93px;top:362px;width:1px;height:252px;background:#a0a0a0"></div>
<div style="left:389px;top:362px;width:1px;height:252px;background:#a0a0a0"></div>
<div style="left:512px;top:362px;width:1px;height:252px;background:#a0a0a0"></div>
<div style="left:582px;top:362px;width:1px;height:252px;background:#a0a0a0"></div>
<div style="left:646px;top:362px;width:1px;height:252px;background:#a0a0a0"></div>
<div style="left:680px;top:362px;width:1px;height:252px;background:#a0a0a0"></div>
<div style="left:774px;top:362px;width:1px;height:252px;background:#a0a0a0"></div>
<div style="left:883px;top:362px;width:1px;height:252px;background:#a0a0a0"></div>
<div style="left:981px;top:362px;width:1px;height:252px;background:#a0a0a0"></div>
<div style="left:39px;top:379px;width:736px;height:73px;border:1px solid #c9a400"></div>
<div style="left:40px;top:486px;width:737px;height:56px;border:2px solid #4f8ce6"></div>
<div style="left:40px;top:594px;width:737px;height:20px;border:2px solid #4f8ce6"></div>
<div style="left:42px;top:505px;width:733px;height:1px;background:#6a8fb3"></div>
<div style="left:42px;top:523px;width:733px;height:1px;background:#6a8fb3"></div>
<div style="left:93px;top:488px;width:1px;height:52px;background:#6a8fb3"></div>
<div style="left:93px;top:596px;width:1px;height:16px;background:#6a8fb3"></div>
<div style="left:389px;top:488px;width:1px;height:52px;background:#6a8fb3"></div>
<div style="left:389px;top:596px;width:1px;height:16px;background:#6a8fb3"></div>
<div style="left:512px;top:488px;width:1px;height:52px;background:#6a8fb3"></div>
<div style="left:512px;top:596px;width:1px;height:16px;background:#6a8fb3"></div>
<div style="left:582px;top:488px;width:1px;height:52px;background:#6a8fb3"></div>
<div style="left:582px;top:596px;width:1px;height:16px;background:#6a8fb3"></div>
<div style="left:646px;top:488px;width:1px;height:52px;background:#6a8fb3"></div>
<div style="left:646px;top:596px;width:1px;height:16px;background:#6a8fb3"></div>
<div style="left:680px;top:488px;width:1px;height:52px;background:#6a8fb3"></div>
<div style="left:680px;top:596px;width:1px;height:16px;background:#6a8fb3"></div>
<div style="left:774px;top:488px;width:1px;height:52px;background:#6a8fb3"></div>
<div style="left:774px;top:596px;width:1px;height:16px;background:#6a8fb3"></div>
<div style="left:40px;top:397px;width:734px;height:1px;background:#b8ae55"></div>
<div style="left:40px;top:415px;width:734px;height:1px;background:#b8ae55"></div>
<div style="left:40px;top:433px;width:734px;height:1px;background:#b8ae55"></div>
<div style="left:93px;top:380px;width:1px;height:71px;background:#b8ae55"></div>
<div style="left:389px;top:380px;width:1px;height:71px;background:#b8ae55"></div>
<div style="left:512px;top:380px;width:1px;height:71px;background:#b8ae55"></div>
<div style="left:582px;top:380px;width:1px;height:71px;background:#b8ae55"></div>
<div style="left:646px;top:380px;width:1px;height:71px;background:#b8ae55"></div>
<div style="left:680px;top:380px;width:1px;height:71px;background:#b8ae55"></div>
<svg style="left:30px;top:366px" width="7" height="10"><path d="M0.5 0.5 L6 5 L0.5 9.5 Z" fill="#000"/></svg>
<div class="t" style="left:41.20px;top:364.84px;font-size:12px;line-height:12px;color:#008000;transform:scaleX(0.88);transform-origin:0 0;">0001</div>
<div class="t" style="left:95.60px;top:364.84px;font-size:12px;line-height:12px;transform:scaleX(0.88);transform-origin:0 0;">SALARIO BASE</div>
<div class="t" style="left:459.95px;top:364.84px;font-size:12px;line-height:12px;transform:scaleX(0.88);transform-origin:100% 0;">10620,00</div>
<div class="t" style="left:549.97px;top:364.84px;font-size:12px;line-height:12px;transform:scaleX(0.88);transform-origin:100% 0;">73,34</div>
<div class="t" style="left:585.00px;top:364.84px;font-size:12px;line-height:12px;transform:scaleX(0.88);transform-origin:0 0;">Vencimento</div>
<div class="t" style="left:649.00px;top:364.84px;font-size:12px;line-height:12px;transform:scaleX(0.88);transform-origin:0 0;">Qtde</div>
<div class="t" style="left:683.00px;top:364.84px;font-size:12px;line-height:12px;transform:scaleX(0.88);transform-origin:0 0;">Férias</div>
<div class="t" style="left:850.97px;top:364.84px;font-size:12px;line-height:12px;transform:scaleX(0.88);transform-origin:100% 0;">73,34</div>
<div class="t" style="left:41.20px;top:382.84px;font-size:12px;line-height:12px;color:#008000;transform:scaleX(0.88);transform-origin:0 0;">0012</div>
<div class="t" style="left:95.60px;top:382.84px;font-size:12px;line-height:12px;color:#008000;transform:scaleX(0.88);transform-origin:0 0;">ABONO PECUNIARIO</div>
<div class="t" style="left:459.95px;top:382.84px;font-size:12px;line-height:12px;color:#008000;transform:scaleX(0.88);transform-origin:100% 0;">10620,00</div>
<div class="t" style="left:549.97px;top:382.84px;font-size:12px;line-height:12px;color:#008000;transform:scaleX(0.88);transform-origin:100% 0;">73,33</div>
<div class="t" style="left:585.00px;top:382.84px;font-size:12px;line-height:12px;color:#008000;transform:scaleX(0.88);transform-origin:0 0;">Vencimento</div>
<div class="t" style="left:649.00px;top:382.84px;font-size:12px;line-height:12px;color:#008000;transform:scaleX(0.88);transform-origin:0 0;">Qtde</div>
<div class="t" style="left:683.00px;top:382.84px;font-size:12px;line-height:12px;color:#008000;transform:scaleX(0.88);transform-origin:0 0;">Férias</div>
<div class="t" style="left:850.97px;top:382.84px;font-size:12px;line-height:12px;color:#008000;transform:scaleX(0.88);transform-origin:100% 0;">73,33</div>
<div class="t" style="left:41.20px;top:400.84px;font-size:12px;line-height:12px;color:#008000;transform:scaleX(0.88);transform-origin:0 0;">0013</div>
<div class="t" style="left:95.60px;top:400.84px;font-size:12px;line-height:12px;color:#008000;transform:scaleX(0.88);transform-origin:0 0;">ADICIONAL DE FERIAS</div>
<div class="t" style="left:466.62px;top:400.84px;font-size:12px;line-height:12px;color:#008000;transform:scaleX(0.88);transform-origin:100% 0;">7079,29</div>
<div class="t" style="left:549.97px;top:400.84px;font-size:12px;line-height:12px;color:#008000;transform:scaleX(0.88);transform-origin:100% 0;">48,88</div>
<div class="t" style="left:585.00px;top:400.84px;font-size:12px;line-height:12px;color:#008000;transform:scaleX(0.88);transform-origin:0 0;">Vencimento</div>
<div class="t" style="left:649.00px;top:400.84px;font-size:12px;line-height:12px;color:#008000;transform:scaleX(0.88);transform-origin:0 0;">Qtde</div>
<div class="t" style="left:683.00px;top:400.84px;font-size:12px;line-height:12px;color:#008000;transform:scaleX(0.88);transform-origin:0 0;">Férias</div>
<div class="t" style="left:850.97px;top:400.84px;font-size:12px;line-height:12px;color:#008000;transform:scaleX(0.88);transform-origin:100% 0;">48,88</div>
<div class="t" style="left:41.20px;top:418.84px;font-size:12px;line-height:12px;color:#008000;transform:scaleX(0.88);transform-origin:0 0;">0053</div>
<div class="t" style="left:95.60px;top:418.84px;font-size:12px;line-height:12px;color:#008000;transform:scaleX(0.88);transform-origin:0 0;">ADIC. DE ABONO PECUNIARIO</div>
<div class="t" style="left:466.62px;top:418.84px;font-size:12px;line-height:12px;color:#008000;transform:scaleX(0.88);transform-origin:100% 0;">3539,65</div>
<div class="t" style="left:549.97px;top:418.84px;font-size:12px;line-height:12px;color:#008000;transform:scaleX(0.88);transform-origin:100% 0;">24,44</div>
<div class="t" style="left:585.00px;top:418.84px;font-size:12px;line-height:12px;color:#008000;transform:scaleX(0.88);transform-origin:0 0;">Vencimento</div>
<div class="t" style="left:649.00px;top:418.84px;font-size:12px;line-height:12px;color:#008000;transform:scaleX(0.88);transform-origin:0 0;">Qtde</div>
<div class="t" style="left:683.00px;top:418.84px;font-size:12px;line-height:12px;color:#008000;transform:scaleX(0.88);transform-origin:0 0;">Férias</div>
<div class="t" style="left:850.97px;top:418.84px;font-size:12px;line-height:12px;color:#008000;transform:scaleX(0.88);transform-origin:100% 0;">24,44</div>
<div class="t" style="left:41.20px;top:436.84px;font-size:12px;line-height:12px;color:#008000;transform:scaleX(0.88);transform-origin:0 0;">0088</div>
<div class="t" style="left:95.60px;top:436.84px;font-size:12px;line-height:12px;color:#008000;transform:scaleX(0.88);transform-origin:0 0;">FERIAS</div>
<div class="t" style="left:459.95px;top:436.84px;font-size:12px;line-height:12px;color:#008000;transform:scaleX(0.88);transform-origin:100% 0;">21240,00</div>
<div class="t" style="left:543.30px;top:436.84px;font-size:12px;line-height:12px;color:#008000;transform:scaleX(0.88);transform-origin:100% 0;">146,66</div>
<div class="t" style="left:585.00px;top:436.84px;font-size:12px;line-height:12px;color:#008000;transform:scaleX(0.88);transform-origin:0 0;">Vencimento</div>
<div class="t" style="left:649.00px;top:436.84px;font-size:12px;line-height:12px;color:#008000;transform:scaleX(0.88);transform-origin:0 0;">Qtde</div>
<div class="t" style="left:683.00px;top:436.84px;font-size:12px;line-height:12px;color:#008000;transform:scaleX(0.88);transform-origin:0 0;">Férias</div>
<div class="t" style="left:844.30px;top:436.84px;font-size:12px;line-height:12px;color:#008000;transform:scaleX(0.88);transform-origin:100% 0;">146,66</div>
<div class="t" style="left:41.20px;top:454.84px;font-size:12px;line-height:12px;color:#ff0000;transform:scaleX(0.88);transform-origin:0 0;">0005</div>
<div class="t" style="left:95.60px;top:454.84px;font-size:12px;line-height:12px;color:#ff0000;transform:scaleX(0.88);transform-origin:0 0;">I.N.S.S. S/ SALARIOS</div>
<div class="t" style="left:473.30px;top:454.84px;font-size:12px;line-height:12px;color:#ff0000;transform:scaleX(0.88);transform-origin:100% 0;">951,64</div>
<div class="t" style="left:573.33px;top:454.84px;font-size:12px;line-height:12px;color:#ff0000;transform:scaleX(0.88);transform-origin:100% 0;">0</div>
<div class="t" style="left:585.00px;top:454.84px;font-size:12px;line-height:12px;color:#ff0000;transform:scaleX(0.88);transform-origin:0 0;">Desconto</div>
<div class="t" style="left:649.00px;top:454.84px;font-size:12px;line-height:12px;color:#ff0000;transform:scaleX(0.88);transform-origin:0 0;">Aut</div>
<div class="t" style="left:683.00px;top:454.84px;font-size:12px;line-height:12px;color:#ff0000;transform:scaleX(0.88);transform-origin:0 0;">Automático</div>
<div class="t" style="left:41.20px;top:472.84px;font-size:12px;line-height:12px;color:#ff0000;transform:scaleX(0.88);transform-origin:0 0;">0006</div>
<div class="t" style="left:95.60px;top:472.84px;font-size:12px;line-height:12px;color:#ff0000;transform:scaleX(0.88);transform-origin:0 0;">I.R.R.F.</div>
<div class="t" style="left:466.62px;top:472.84px;font-size:12px;line-height:12px;color:#ff0000;transform:scaleX(0.88);transform-origin:100% 0;">1697,93</div>
<div class="t" style="left:556.64px;top:472.84px;font-size:12px;line-height:12px;color:#ff0000;transform:scaleX(0.88);transform-origin:100% 0;">27,5</div>
<div class="t" style="left:585.00px;top:472.84px;font-size:12px;line-height:12px;color:#ff0000;transform:scaleX(0.88);transform-origin:0 0;">Desconto</div>
<div class="t" style="left:649.00px;top:472.84px;font-size:12px;line-height:12px;color:#ff0000;transform:scaleX(0.88);transform-origin:0 0;">Aut</div>
<div class="t" style="left:683.00px;top:472.84px;font-size:12px;line-height:12px;color:#ff0000;transform:scaleX(0.88);transform-origin:0 0;">Automático</div>
<div class="t" style="left:41.20px;top:490.84px;font-size:12px;line-height:12px;color:#a00000;transform:scaleX(0.88);transform-origin:0 0;">0054</div>
<div class="t" style="left:95.60px;top:490.84px;font-size:12px;line-height:12px;color:#a00000;transform:scaleX(0.88);transform-origin:0 0;">ADIC. DE ABONO PEC. PAGO</div>
<div class="t" style="left:466.62px;top:490.84px;font-size:12px;line-height:12px;color:#a00000;transform:scaleX(0.88);transform-origin:100% 0;">3539,65</div>
<div class="t" style="left:585.00px;top:490.84px;font-size:12px;line-height:12px;color:#a00000;transform:scaleX(0.88);transform-origin:0 0;">Desconto</div>
<div class="t" style="left:649.00px;top:490.84px;font-size:12px;line-height:12px;color:#a00000;transform:scaleX(0.88);transform-origin:0 0;">Vlr</div>
<div class="t" style="left:683.00px;top:490.84px;font-size:12px;line-height:12px;color:#a00000;transform:scaleX(0.88);transform-origin:0 0;">Férias</div>
<div class="t" style="left:41.20px;top:508.84px;font-size:12px;line-height:12px;color:#a00000;transform:scaleX(0.88);transform-origin:0 0;">0057</div>
<div class="t" style="left:95.60px;top:508.84px;font-size:12px;line-height:12px;color:#a00000;transform:scaleX(0.88);transform-origin:0 0;">ABONO PECUNIARIO PAGO</div>
<div class="t" style="left:459.95px;top:508.84px;font-size:12px;line-height:12px;color:#a00000;transform:scaleX(0.88);transform-origin:100% 0;">10620,00</div>
<div class="t" style="left:585.00px;top:508.84px;font-size:12px;line-height:12px;color:#a00000;transform:scaleX(0.88);transform-origin:0 0;">Desconto</div>
<div class="t" style="left:649.00px;top:508.84px;font-size:12px;line-height:12px;color:#a00000;transform:scaleX(0.88);transform-origin:0 0;">Vlr</div>
<div class="t" style="left:683.00px;top:508.84px;font-size:12px;line-height:12px;color:#a00000;transform:scaleX(0.88);transform-origin:0 0;">Férias</div>
<div class="t" style="left:41.20px;top:526.84px;font-size:12px;line-height:12px;color:#a00000;transform:scaleX(0.88);transform-origin:0 0;">0074</div>
<div class="t" style="left:95.60px;top:526.84px;font-size:12px;line-height:12px;color:#a00000;transform:scaleX(0.88);transform-origin:0 0;">ADICIONAL DE FERIAS PAGO</div>
<div class="t" style="left:466.62px;top:526.84px;font-size:12px;line-height:12px;color:#a00000;transform:scaleX(0.88);transform-origin:100% 0;">7079,29</div>
<div class="t" style="left:585.00px;top:526.84px;font-size:12px;line-height:12px;color:#a00000;transform:scaleX(0.88);transform-origin:0 0;">Desconto</div>
<div class="t" style="left:649.00px;top:526.84px;font-size:12px;line-height:12px;color:#a00000;transform:scaleX(0.88);transform-origin:0 0;">Vlr</div>
<div class="t" style="left:683.00px;top:526.84px;font-size:12px;line-height:12px;color:#a00000;transform:scaleX(0.88);transform-origin:0 0;">Férias</div>
<div class="t" style="left:41.20px;top:544.84px;font-size:12px;line-height:12px;color:#ff0000;transform:scaleX(0.88);transform-origin:0 0;">0087</div>
<div class="t" style="left:95.60px;top:544.84px;font-size:12px;line-height:12px;color:#ff0000;transform:scaleX(0.88);transform-origin:0 0;">FERIAS PAGAS</div>
<div class="t" style="left:459.95px;top:544.84px;font-size:12px;line-height:12px;color:#ff0000;transform:scaleX(0.88);transform-origin:100% 0;">20288,36</div>
<div class="t" style="left:585.00px;top:544.84px;font-size:12px;line-height:12px;color:#ff0000;transform:scaleX(0.88);transform-origin:0 0;">Desconto</div>
<div class="t" style="left:649.00px;top:544.84px;font-size:12px;line-height:12px;color:#ff0000;transform:scaleX(0.88);transform-origin:0 0;">Vlr</div>
<div class="t" style="left:683.00px;top:544.84px;font-size:12px;line-height:12px;color:#ff0000;transform:scaleX(0.88);transform-origin:0 0;">Férias</div>
<div class="t" style="left:41.20px;top:562.84px;font-size:12px;line-height:12px;color:#808080;transform:scaleX(0.88);transform-origin:0 0;">0011</div>
<div class="t" style="left:95.60px;top:562.84px;font-size:12px;line-height:12px;color:#808080;transform:scaleX(0.88);transform-origin:0 0;">F.G.T.S.</div>
<div class="t" style="left:467.51px;top:562.84px;font-size:12px;line-height:12px;color:#808080;transform:scaleX(0.88);transform-origin:100% 0;">3115,14</div>
<div class="t" style="left:573.33px;top:562.84px;font-size:12px;line-height:12px;color:#808080;transform:scaleX(0.88);transform-origin:100% 0;">8</div>
<div class="t" style="left:585.00px;top:562.84px;font-size:12px;line-height:12px;color:#808080;transform:scaleX(0.88);transform-origin:0 0;">Neutro</div>
<div class="t" style="left:649.00px;top:562.84px;font-size:12px;line-height:12px;color:#808080;transform:scaleX(0.88);transform-origin:0 0;">Aut</div>
<div class="t" style="left:683.00px;top:562.84px;font-size:12px;line-height:12px;color:#808080;transform:scaleX(0.88);transform-origin:0 0;">Automático</div>
<div class="t" style="left:41.20px;top:580.84px;font-size:12px;line-height:12px;color:#808080;transform:scaleX(0.88);transform-origin:0 0;">0017</div>
<div class="t" style="left:95.60px;top:580.84px;font-size:12px;line-height:12px;color:#808080;transform:scaleX(0.88);transform-origin:0 0;">I.R. RETIDO EM FÉRIAS</div>
<div class="t" style="left:466.62px;top:580.84px;font-size:12px;line-height:12px;color:#808080;transform:scaleX(0.88);transform-origin:100% 0;">6565,24</div>
<div class="t" style="left:585.00px;top:580.84px;font-size:12px;line-height:12px;color:#808080;transform:scaleX(0.88);transform-origin:0 0;">Neutro</div>
<div class="t" style="left:649.00px;top:580.84px;font-size:12px;line-height:12px;color:#808080;transform:scaleX(0.88);transform-origin:0 0;">Vlr</div>
<div class="t" style="left:683.00px;top:580.84px;font-size:12px;line-height:12px;color:#808080;transform:scaleX(0.88);transform-origin:0 0;">Férias</div>
<div class="t" style="left:41.20px;top:598.84px;font-size:12px;line-height:12px;color:#5c6670;transform:scaleX(0.88);transform-origin:0 0;">0077</div>
<div class="t" style="left:95.60px;top:598.84px;font-size:12px;line-height:12px;color:#5c6670;transform:scaleX(0.88);transform-origin:0 0;">I.N.S.S. PROVISIONADO EM FERIAS</div>
<div class="t" style="left:473.30px;top:598.84px;font-size:12px;line-height:12px;color:#5c6670;transform:scaleX(0.88);transform-origin:100% 0;">951,64</div>
<div class="t" style="left:585.00px;top:598.84px;font-size:12px;line-height:12px;color:#5c6670;transform:scaleX(0.88);transform-origin:0 0;">Neutro</div>
<div class="t" style="left:649.00px;top:598.84px;font-size:12px;line-height:12px;color:#5c6670;transform:scaleX(0.88);transform-origin:0 0;">Vlr</div>
<div class="t" style="left:683.00px;top:598.84px;font-size:12px;line-height:12px;color:#5c6670;transform:scaleX(0.88);transform-origin:0 0;">Férias</div>
<div style="left:26px;top:832px;width:956px;height:25px;background:#f0f0f0;border:1px solid #a0a0a0"></div>
<div style="left:1123px;top:348px;width:679px;height:394px;background:rgba(0,0,0,0.18);filter:blur(1px)"></div>
<div style="left:1121px;top:346px;width:679px;height:394px;background:#fff799;border:2px solid #e0664a;box-shadow:0 0 0 1px #f0a080 inset"></div>
<div class="t" style="left:1124.00px;top:350.70px;font-size:13px;line-height:13px;font-weight:700;color:#111;transform:scaleX(0.9868);transform-origin:0 0;">MOVIMENTO DE FOLHA</div>
<div class="t" style="left:1124.00px;top:366.70px;font-size:13px;line-height:13px;font-weight:700;color:#111;transform:scaleX(0.9802);transform-origin:0 0;">PROCESSAMENTO DE FÉRIAS</div>
<div class="t" style="left:1124.00px;top:414.90px;font-size:13px;line-height:13px;font-weight:700;color:#111;">Férias de 02/02/2026 à 21/02/2026</div>
<div class="t" style="left:1124.00px;top:446.60px;font-size:13px;line-height:13px;font-weight:700;color:#111;transform:scaleX(1.0240);transform-origin:0 0;">Total de Proventos de Férias</div>
<div style="left:1305px;top:444.6px;width:127px;height:17px;overflow:hidden"><div class="t" style="left:0;top:2px;font-size:13px;line-height:13px;font-weight:700;color:#111;letter-spacing:0.05px">........................................................................................................................</div></div>
<div class="t" style="left:1437.50px;top:446.60px;font-size:13px;line-height:13px;font-weight:700;color:#111;">R$</div>
<div class="t" style="left:1463.17px;top:446.60px;font-size:13px;line-height:13px;font-weight:700;color:#111;">42.478,94</div>
<div class="t" style="left:1124.00px;top:478.80px;font-size:13px;line-height:13px;font-weight:700;color:#111;transform:scaleX(0.9884);transform-origin:0 0;">Descontos (Zeramento)</div>
<div class="t" style="left:1124.00px;top:511.00px;font-size:13px;line-height:13px;font-weight:700;color:#111;transform:scaleX(1.0176);transform-origin:0 0;">Evt 054 - Adic. de Abono Pec. Pago</div>
<div style="left:1346px;top:509.0px;width:86px;height:17px;overflow:hidden"><div class="t" style="left:0;top:2px;font-size:13px;line-height:13px;font-weight:700;color:#111;letter-spacing:0.05px">........................................................................................................................</div></div>
<div class="t" style="left:1437.50px;top:511.00px;font-size:13px;line-height:13px;font-weight:700;color:#111;">R$</div>
<div class="t" style="left:1468.40px;top:511.00px;font-size:13px;line-height:13px;font-weight:700;color:#111;">3.539,65</div>
<div class="t" style="left:1124.00px;top:527.00px;font-size:13px;line-height:13px;font-weight:700;color:#111;transform:scaleX(1.0062);transform-origin:0 0;">Evt 057 - Abono Pec. Pago</div>
<div style="left:1289px;top:525.0px;width:143px;height:17px;overflow:hidden"><div class="t" style="left:0;top:2px;font-size:13px;line-height:13px;font-weight:700;color:#111;letter-spacing:0.05px">........................................................................................................................</div></div>
<div class="t" style="left:1437.50px;top:527.00px;font-size:13px;line-height:13px;font-weight:700;color:#111;">R$</div>
<div class="t" style="left:1460.17px;top:527.00px;font-size:13px;line-height:13px;font-weight:700;color:#111;">10.620,00</div>
<div class="t" style="left:1124.00px;top:543.00px;font-size:13px;line-height:13px;font-weight:700;color:#111;transform:scaleX(1.0204);transform-origin:0 0;">Evt 074 - Adicional de Férias Pago</div>
<div style="left:1340px;top:541.0px;width:91px;height:17px;overflow:hidden"><div class="t" style="left:0;top:2px;font-size:13px;line-height:13px;font-weight:700;color:#111;letter-spacing:0.05px">........................................................................................................................</div></div>
<div class="t" style="left:1435.60px;top:543.00px;font-size:13px;line-height:13px;font-weight:700;color:#111;">R$</div>
<div class="t" style="left:1466.40px;top:543.00px;font-size:13px;line-height:13px;font-weight:700;color:#111;">7.079,29</div>
<div class="t" style="left:1124.00px;top:559.00px;font-size:13px;line-height:13px;font-weight:700;color:#111;transform:scaleX(1.0124);transform-origin:0 0;">Evt 087 - Férias Pagas</div>
<div style="left:1263px;top:557.0px;width:169px;height:17px;overflow:hidden"><div class="t" style="left:0;top:2px;font-size:13px;line-height:13px;font-weight:700;color:#111;letter-spacing:0.05px">........................................................................................................................</div></div>
<div class="t" style="left:1437.50px;top:559.00px;font-size:13px;line-height:13px;font-weight:700;color:#111;">R$</div>
<div class="t" style="left:1460.17px;top:559.00px;font-size:13px;line-height:13px;font-weight:700;color:#111;">20.288,36</div>
<div class="t" style="left:1522.00px;top:559.00px;font-size:13px;line-height:13px;font-weight:700;color:#111;">(Ajustado)</div>
<div class="t" style="left:1432.00px;top:575.00px;font-size:13px;line-height:13px;font-weight:700;color:#111;transform:scaleX(0.9135);transform-origin:0 0;">----------------------</div>
<div class="t" style="left:1124.00px;top:591.00px;font-size:13px;line-height:13px;font-weight:700;color:#111;transform:scaleX(1.0137);transform-origin:0 0;">Total</div>
<div style="left:1154.5px;top:589.0px;width:275.5px;height:17px;overflow:hidden"><div class="t" style="left:0;top:2px;font-size:13px;line-height:13px;font-weight:700;color:#111;letter-spacing:0.05px">........................................................................................................................</div></div>
<div class="t" style="left:1435.00px;top:591.00px;font-size:13px;line-height:13px;font-weight:700;color:#111;">R$</div>
<div class="t" style="left:1457.57px;top:591.00px;font-size:13px;line-height:13px;font-weight:700;color:#111;">41.527,30</div>
<div class="t" style="left:1124.00px;top:623.00px;font-size:13px;line-height:13px;font-weight:700;color:#111;">Evt 077 - INSS Provisionado</div>
<div style="left:1297px;top:621.0px;width:135px;height:17px;overflow:hidden"><div class="t" style="left:0;top:2px;font-size:13px;line-height:13px;font-weight:700;color:#111;letter-spacing:0.05px">........................................................................................................................</div></div>
<div class="t" style="left:1437.50px;top:623.00px;font-size:13px;line-height:13px;font-weight:700;color:#111;">R$</div>
<div class="t" style="left:1476.24px;top:623.00px;font-size:13px;line-height:13px;font-weight:700;color:#111;">951,64</div>
<div class="t" style="left:1435.60px;top:639.00px;font-size:13px;line-height:13px;font-weight:700;color:#111;transform:scaleX(0.9240);transform-origin:0 0;">--------------------</div>
<div class="t" style="left:1124.60px;top:655.00px;font-size:13px;line-height:13px;font-weight:700;color:#111;transform:scaleX(1.0251);transform-origin:0 0;">Saldo de férias (Zeramento)</div>
<div style="left:1300.1px;top:653.0px;width:126.90000000000009px;height:17px;overflow:hidden"><div class="t" style="left:0;top:2px;font-size:13px;line-height:13px;font-weight:700;color:#111;letter-spacing:0.05px">........................................................................................................................</div></div>
<div class="t" style="left:1432.00px;top:655.00px;font-size:13px;line-height:13px;font-weight:700;color:#111;">R$</div>
<div class="t" style="left:1490.65px;top:655.00px;font-size:13px;line-height:13px;font-weight:700;color:#111;">0,00 - OK</div>
<div class="t" style="left:1124.00px;top:687.00px;font-size:13px;line-height:13px;font-weight:700;color:#111;transform:scaleX(1.0130);transform-origin:0 0;">OBSERVAÇÃO: No valor do evento 087 - Férias Pagas, já está Descontado o valor do evento 0077 - INSS</div>
<div class="t" style="left:1124.00px;top:703.00px;font-size:13px;line-height:13px;font-weight:700;color:#111;transform:scaleX(1.0139);transform-origin:0 0;">Provisionado das Férias. O Evento 0017 - IR Retido das Férias, não é descontado.</div>
<div style="left:23px;top:857px;width:1883px;height:2px;background:#a0a0a0"></div>
<div style="left:23px;top:859px;width:1883px;height:52px;background:#fafafa"></div>
<div class="t" style="left:31.00px;top:863.84px;font-size:12px;line-height:12px;transform:scaleX(1.0417);transform-origin:0 0;">$ Vencimentos</div>
<div style="left:29px;top:880px;width:118px;height:23px;background:#fff;border:1px solid #a9a9a9"></div>
<div class="t" style="left:72.94px;top:885.84px;font-size:12px;line-height:12px;font-weight:700;color:#6655ff;transform:scaleX(1.05);transform-origin:100% 0;">R$ 53.098,94</div>
<div class="t" style="left:155.50px;top:863.84px;font-size:12px;line-height:12px;transform:scaleX(1.0269);transform-origin:0 0;">$ Descontos</div>
<div style="left:154px;top:880px;width:118px;height:23px;background:#fff;border:1px solid #a9a9a9"></div>
<div class="t" style="left:197.94px;top:885.84px;font-size:12px;line-height:12px;font-weight:700;color:#ff4545;transform:scaleX(1.05);transform-origin:100% 0;">R$ 44.176,87</div>
<div class="t" style="left:281.00px;top:863.84px;font-size:12px;line-height:12px;transform:scaleX(0.9721);transform-origin:0 0;">$ Líquido</div>
<div style="left:279px;top:880px;width:118px;height:23px;background:#fff;border:1px solid #a9a9a9"></div>
<div class="t" style="left:329.62px;top:885.84px;font-size:12px;line-height:12px;font-weight:700;color:#3c9c7c;transform:scaleX(1.05);transform-origin:100% 0;">R$ 8.922,07</div>
<div class="t" style="left:406.00px;top:863.84px;font-size:12px;line-height:12px;transform:scaleX(1.0420);transform-origin:0 0;">$ Ded. Dependentes</div>
<div style="left:404px;top:880px;width:118px;height:23px;background:#fff;border:1px solid #a9a9a9"></div>
<div class="t" style="left:464.62px;top:885.84px;font-size:12px;line-height:12px;font-weight:700;color:#0c8a0c;transform:scaleX(1.05);transform-origin:100% 0;">R$ 189,59</div>
<div class="t" style="left:530.50px;top:863.84px;font-size:12px;line-height:12px;transform:scaleX(0.9354);transform-origin:0 0;">Base INSS</div>
<div style="left:529px;top:880px;width:118px;height:23px;background:#fff;border:1px solid #a9a9a9"></div>
<div class="t" style="left:572.94px;top:885.84px;font-size:12px;line-height:12px;font-weight:700;color:#555;transform:scaleX(1.05);transform-origin:100% 0;">R$ 38.939,29</div>
<div class="t" style="left:650.40px;top:863.84px;font-size:12px;line-height:12px;transform:scaleX(0.9674);transform-origin:0 0;">Base INSS 13o.</div>
<div style="left:650px;top:880px;width:117px;height:23px;background:#fff;border:1px solid #a9a9a9"></div>
<div class="t" style="left:722.97px;top:885.84px;font-size:12px;line-height:12px;font-weight:700;color:#555;transform:scaleX(1.05);transform-origin:100% 0;">R$ 0,00</div>
<div class="t" style="left:776.30px;top:863.84px;font-size:12px;line-height:12px;transform:scaleX(0.9205);transform-origin:0 0;">Base FGTS</div>
<div style="left:775px;top:880px;width:117px;height:23px;background:#fff;border:1px solid #a9a9a9"></div>
<div class="t" style="left:817.94px;top:885.84px;font-size:12px;line-height:12px;font-weight:700;color:#555;transform:scaleX(1.05);transform-origin:100% 0;">R$ 38.939,29</div>
<div class="t" style="left:896.00px;top:863.84px;font-size:12px;line-height:12px;transform:scaleX(0.9656);transform-origin:0 0;">Base FGTS 13o.</div>
<div style="left:895px;top:880px;width:117px;height:23px;background:#fff;border:1px solid #a9a9a9"></div>
<div class="t" style="left:967.97px;top:885.84px;font-size:12px;line-height:12px;font-weight:700;color:#555;transform:scaleX(1.05);transform-origin:100% 0;">R$ 0,00</div>
<div class="t" style="left:1021.30px;top:863.84px;font-size:12px;line-height:12px;transform:scaleX(0.9620);transform-origin:0 0;">Base I.R.R.F.</div>
<div style="left:1020px;top:880px;width:117px;height:23px;background:#fff;border:1px solid #a9a9a9"></div>
<div class="t" style="left:1069.62px;top:885.84px;font-size:12px;line-height:12px;font-weight:700;color:#555;transform:scaleX(1.05);transform-origin:100% 0;">R$ 9.478,77</div>
<div class="t" style="left:1140.30px;top:863.84px;font-size:12px;line-height:12px;transform:scaleX(0.9930);transform-origin:0 0;">Base I.R.R.F. 13o.</div>
<div style="left:1140px;top:880px;width:117px;height:23px;background:#fff;border:1px solid #a9a9a9"></div>
<div class="t" style="left:1212.97px;top:885.84px;font-size:12px;line-height:12px;font-weight:700;color:#555;transform:scaleX(1.05);transform-origin:100% 0;">R$ 0,00</div>
<div style="left:0px;top:911px;width:1906px;height:1px;background:#a0a0a0"></div>
<div style="left:0px;top:912px;width:1906px;height:22px;background:#f0f0f0;border-top:1px solid #fff;border-left:1px solid #fff"></div>
<div style="left:2px;top:933px;width:1904px;height:1px;background:#9a9a9a"></div>
<div class="t" style="left:34.00px;top:917.54px;font-size:12px;line-height:12px;font-weight:700;transform:scaleX(1.0189);transform-origin:0 0;">00003</div>
<div style="left:100px;top:914px;width:1px;height:17px;background:#d0d0d0"></div>
<div class="t" style="left:304.00px;top:917.54px;font-size:12px;line-height:12px;font-weight:700;">ADAIR PASA</div>
<div style="left:580px;top:914px;width:1px;height:17px;background:#d0d0d0"></div>
<div style="left:680px;top:914px;width:1px;height:17px;background:#d0d0d0"></div>
<div class="t" style="left:685.00px;top:917.54px;font-size:12px;line-height:12px;font-weight:700;transform:scaleX(0.9545);transform-origin:0 0;">Consulta</div>
<div style="left:1820px;top:913px;width:86px;height:20px;background:#f0f0f0;border-left:1px solid #fff"></div>
<div style="left:1819px;top:913px;width:1px;height:20px;background:#d0d0d0"></div>
<svg style="left:1826px;top:916px" width="80" height="14" viewBox="0 0 80 14">
<rect x="2" y="1.5" width="1.6" height="9" fill="#8a8a8a"/><path d="M12.5 1.5 L4.5 6 L12.5 10.5 Z" fill="#9a9a9a"/>
<path d="M32 1.5 L24 6 L32 10.5 Z" fill="#9a9a9a"/>
<path d="M45 1.5 L53 6 L45 10.5 Z" fill="#1469d8"/>
<path d="M65.5 1.5 L73.5 6 L65.5 10.5 Z" fill="#1469d8"/><rect x="74" y="1.5" width="1.6" height="9" fill="#1469d8"/>
</svg>
<div style="left:0px;top:934px;width:1913px;height:1px;background:#a0a0a0"></div>
<div style="left:0px;top:935px;width:1911px;height:1px;background:#45c8f2"></div>
<div style="left:0px;top:936px;width:1912px;height:1px;background:#000"></div>
<div style="left:0px;top:937px;width:1913px;height:22px;background:#ececec"></div>
<div style="left:0px;top:937px;width:1913px;height:3px;background:#f7f7f7"></div>
<div class="t" style="left:7.30px;top:945.04px;font-size:12px;line-height:12px;color:#333;transform:scaleX(1.0740);transform-origin:0 0;">6/3/2026 Mar/2026</div>
<div style="left:128px;top:940px;width:1px;height:19px;background:#a0a0a0"></div>
<svg style="left:130px;top:941px" width="230" height="18" viewBox="0 0 230 18">
<g fill="none" stroke="#555d66" stroke-width="1.6"><path d="M4.5 9 V8 A6.5 6.5 0 0 1 17.5 8 V9"/></g>
<ellipse cx="4.5" cy="11.5" rx="2" ry="3.8" fill="#555d66"/><ellipse cx="17.5" cy="11.5" rx="2" ry="3.8" fill="#555d66"/>
<path d="M17.5 15 Q16 18 12 17.5" stroke="#555" stroke-width="1.5" fill="none"/>
<text x="29" y="14" font-family="Liberation Serif" font-size="16.5" fill="#333">@</text>
<rect x="55.5" y="3" width="14" height="14" rx="2" fill="#111"/><rect x="57.5" y="8.5" width="10" height="6.5" fill="#eee"/><circle cx="62.5" cy="10" r="3.4" fill="#eee" stroke="#111" stroke-width="1.6"/><circle cx="66.8" cy="5.3" r="1" fill="#eee"/>
<rect x="80" y="7" width="2.6" height="9" fill="#111"/><circle cx="81.3" cy="4" r="1.6" fill="#111"/>
<path d="M85 16 V7 H87.5 V8.5 Q89 6.7 91.5 6.8 Q94.5 7 94.5 10.5 V16 H91.8 V11 Q91.8 9 90 9 Q87.7 9 87.7 11.5 V16 Z" fill="#111"/>
<rect x="104" y="4" width="16" height="12" rx="3.5" fill="#111"/><path d="M110 7 L115.5 10 L110 13 Z" fill="#fff"/>
<rect x="128" y="1" width="18" height="17" fill="#1a1a1a"/>
<path d="M131.5 4 H135 L143 15 H139.5 Z" fill="none" stroke="#fff" stroke-width="1.2"/><path d="M142.5 4 L132 15" stroke="#fff" stroke-width="1.2"/>
<rect x="155" y="3" width="14" height="14" rx="1" fill="#111"/><path d="M163.5 17 V11 H165.8 L166.2 8.6 H163.5 V7.2 Q163.5 6.2 164.6 6.2 H166.3 V4 Q165.3 3.9 164 3.9 Q160.8 3.9 160.8 7 V8.6 H158.7 V11 H160.8 V17 Z" fill="#fff"/>
<path d="M179 4 L184 4 L183 7 Z" fill="#4cd03c"/><path d="M184 4 L192 4 L186 16 Z" fill="#1e7fe0"/><path d="M184 7 L187 7 L185.5 12 Z" fill="#15b0c0"/>
<path d="M199 8.5 L211 3 L223 8.5 L211 13 Z" fill="none" stroke="#333" stroke-width="1.3"/><path d="M204 11 V14.5 Q211 17.5 218 14.5 V11" fill="#d8d8d8" stroke="#333" stroke-width="1.2"/><path d="M200.5 9 V17" stroke="#333" stroke-width="1.2"/>
</svg>
<div class="t" style="left:358.00px;top:945.04px;font-size:12px;line-height:12px;color:#111;transform:scaleX(0.9258);transform-origin:0 0;">Teorema Sistemas</div>
<div style="left:358px;top:956px;width:92px;height:1px;background:#111"></div>
<div style="left:453px;top:940px;width:1px;height:19px;background:#a0a0a0"></div>
<div class="t" style="left:457.00px;top:945.04px;font-size:12px;line-height:12px;color:#333;transform:scaleX(0.9906);transform-origin:0 0;">Folha de Pagamento - v.25.08a03.05a</div>
<div style="left:670px;top:940px;width:1px;height:19px;background:#a0a0a0"></div>
<div class="t" style="left:874.00px;top:945.04px;font-size:12px;line-height:12px;color:#333;transform:scaleX(0.9830);transform-origin:0 0;">0001 Spinner Industria e Comercio Ltda.</div>
<div style="left:1293px;top:940px;width:1px;height:19px;background:#a0a0a0"></div>
<div class="t" style="left:1296.80px;top:945.04px;font-size:12px;line-height:12px;color:#333;transform:scaleX(0.9296);transform-origin:0 0;">Reg: SPINNER IND. COMERCIO LTDA.</div>
<div style="left:1594px;top:940px;width:1px;height:19px;background:#a0a0a0"></div>
</body></html>
